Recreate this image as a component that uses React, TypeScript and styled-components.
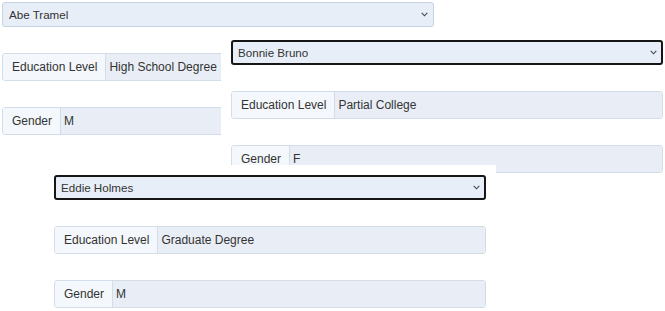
import styled, { createGlobalStyle } from 'styled-components';

interface Person {
  name: string;
  education: string;
  gender: string;
}

const people: Person[] = [
  { name: 'Abe Tramel', education: 'High School Degree', gender: 'M' },
  { name: 'Bonnie Bruno', education: 'Partial College', gender: 'F' },
  { name: 'Eddie Holmes', education: 'Graduate Degree', gender: 'M' },
];

// where each card sits on the canvas
const spots = [
  { x: -8, y: -8, focused: false },
  { x: 221, y: 30, focused: true },
  { x: 44, y: 165, focused: true },
];

const GlobalStyle = createGlobalStyle`
  html, body {
    margin: 0;
    padding: 0;
    background: #fff;
    overflow: hidden;
  }
  body {
    font-family: "Liberation Sans", Arial, sans-serif;
    color: #333;
  }
`;

const Canvas = styled.div`
  position: relative;
  width: 665px;
  height: 311px;
  overflow: hidden;
`;

const Card = styled.div<{ $x: number; $y: number }>`
  position: absolute;
  left: ${(p) => p.$x}px;
  top: ${(p) => p.$y}px;
  width: 432px;
  padding: 10px;
  background: #fff;
  display: flex;
  flex-direction: column;
  gap: 26px;
`;

const SelectWrap = styled.div`
  position: relative;
  height: 25px;
`;

const Select = styled.select<{ $focused: boolean }>`
  appearance: none;
  -webkit-appearance: none;
  height: 25px;
  width: 100%;
  box-sizing: border-box;
  padding: 0 20px 0 ${(p) => (p.$focused ? 5 : 6)}px;
  font-family: "Liberation Sans", Arial, sans-serif;
  font-size: 11.6px;
  color: #333;
  background-color: #e8eef7;
  border: ${(p) => (p.$focused ? '2px solid #161616' : '1px solid #c6d3e3')};
  border-radius: 3px;
  outline: none;
`;

const Chevron = styled.svg`
  position: absolute;
  right: 6px;
  top: 10px;
  width: 7px;
  height: 5px;
  pointer-events: none;
`;

const Group = styled.div`
  display: flex;
  height: 28px;
  box-sizing: border-box;
  border: 1px solid #d3ddea;
  border-radius: 3px;
  overflow: hidden;
  font-size: 12px;
`;

const Addon = styled.span`
  display: flex;
  align-items: center;
  padding: 0 8px 0 9px;
  background: #f4f7fb;
  border-right: 1px solid #d3ddea;
  white-space: nowrap;
`;

const Field = styled.input`
  flex: 1;
  min-width: 0;
  border: none;
  outline: none;
  padding: 0 3px;
  background: #e9eef6;
  font-family: "Liberation Sans", Arial, sans-serif;
  font-size: 12px;
  color: #333;
`;

const PersonCard = ({ person, x, y, focused }: { person: Person; x: number; y: number; focused: boolean }) => (
  <Card $x={x} $y={y}>
    <SelectWrap>
      <Select $focused={focused} defaultValue={person.name}>
        {people.map((p) => (
          <option key={p.name}>{p.name}</option>
        ))}
      </Select>
      <Chevron viewBox="0 0 7 5">
        <path d="M0.7 0.9 L3.5 3.8 L6.3 0.9" fill="none" stroke="#444" strokeWidth="1.1" />
      </Chevron>
    </SelectWrap>
    <Group>
      <Addon>Education Level</Addon>
      <Field readOnly value={person.education} />
    </Group>
    <Group>
      <Addon>Gender</Addon>
      <Field readOnly value={person.gender} />
    </Group>
  </Card>
);

export default function App() {
  return (
    <>
      <GlobalStyle />
      <Canvas>
        {people.map((person, i) => (
          <PersonCard key={person.name} person={person} {...spots[i]} />
        ))}
      </Canvas>
    </>
  );
}
